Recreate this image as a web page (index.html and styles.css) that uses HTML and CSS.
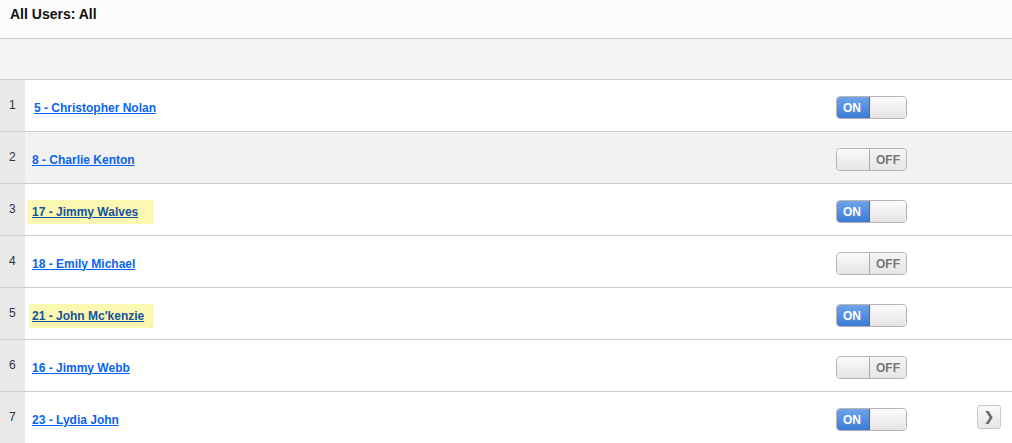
FILE: index.html
```html
<!DOCTYPE html>
<html lang="en">
<head>
    <meta charset="UTF-8">
    <meta name="viewport" content="width=device-width, initial-scale=1.0">
    <title>All Users</title>
    <link rel="stylesheet" href="styles.css">
</head>
<body>

<div class="page">
    <div class="header">All Users: All</div>
    <div class="toolbar"></div>

    <div class="list">
        <div class="row">
            <div class="idx">1</div>
            <div class="cell">
                <div class="name first"><a href="#">5 - Christopher Nolan</a></div>
                <div class="switch on"><span class="label">ON</span><span class="knob"></span></div>
            </div>
        </div>
        <div class="row alt">
            <div class="idx">2</div>
            <div class="cell">
                <div class="name"><a href="#">8 - Charlie Kenton</a></div>
                <div class="switch off"><span class="knob"></span><span class="label">OFF</span></div>
            </div>
        </div>
        <div class="row">
            <div class="idx">3</div>
            <div class="cell">
                <div class="name marked"><a href="#">17 - Jimmy Walves</a></div>
                <div class="switch on"><span class="label">ON</span><span class="knob"></span></div>
            </div>
        </div>
        <div class="row">
            <div class="idx">4</div>
            <div class="cell">
                <div class="name"><a href="#">18 - Emily Michael</a></div>
                <div class="switch off"><span class="knob"></span><span class="label">OFF</span></div>
            </div>
        </div>
        <div class="row">
            <div class="idx">5</div>
            <div class="cell">
                <div class="name marked m2"><a href="#">21 - John Mc'kenzie</a></div>
                <div class="switch on"><span class="label">ON</span><span class="knob"></span></div>
            </div>
        </div>
        <div class="row">
            <div class="idx">6</div>
            <div class="cell">
                <div class="name"><a href="#">16 - Jimmy Webb</a></div>
                <div class="switch off"><span class="knob"></span><span class="label">OFF</span></div>
            </div>
        </div>
        <div class="row">
            <div class="idx">7</div>
            <div class="cell">
                <div class="name"><a href="#">23 - Lydia John</a></div>
                <div class="switch on"><span class="label">ON</span><span class="knob"></span></div>
            </div>
        </div>
    </div>

    <button class="next">&#10095;</button>
</div>

</body>
</html>
```

FILE: styles.css
```css
body {
    margin: 0;
    font-family: "Liberation Sans", Arial, sans-serif;
    font-size: 12px;
    color: #333;
    background: #fff;
}
.page {
    position: relative;
    height: 443px;
    overflow: hidden;
}
.header {
    height: 39px;
    box-sizing: border-box;
    padding: 6px 10px;
    background: #fcfcfc;
    border-bottom: 1px solid #ccc;
    font-weight: bold;
    font-size: 14px;
    color: #111;
}
.toolbar {
    height: 40px;
    background: #f4f4f4;
    border-bottom: 1px solid #ccc;
}
.row {
    display: flex;
    height: 51px;
    border-bottom: 1px solid #ccc;
    background: #fff;
}
.row.alt {
    background: #f2f2f2;
}
.idx {
    width: 25px;
    flex-shrink: 0;
    background: #e9e9e9;
    padding: 18px 0 0 9px;
    box-sizing: border-box;
    color: #333;
}
.cell {
    flex: 1;
    display: flex;
    align-items: center;
    padding: 4px 105px 0 0;
}
.name {
    width: 126px;
    margin-left: 2px;
    padding: 5px 0 5px 5px;
    box-sizing: border-box;
    white-space: nowrap;
}
.name.first {
    padding-left: 7px;
}
.name a {
    color: #0a64f0;
    font-weight: bold;
    text-decoration: underline;
}
.name.marked {
    background: #fbf9b1;
}
.name.marked a {
    color: #14529e;
}
.name.m2 {
    margin-left: 4px;
    width: 124px;
    padding-left: 3px;
}
.switch {
    margin-left: auto;
    display: flex;
    width: 71px;
    height: 23px;
    box-sizing: border-box;
    border: 1px solid #b5b5b5;
    border-radius: 4px;
    overflow: hidden;
    font-weight: bold;
    font-size: 12px;
}
.switch .label {
    display: flex;
    align-items: center;
}
.switch.on .label {
    width: 33px;
    padding-left: 6px;
    box-sizing: border-box;
    color: #fff;
    background: linear-gradient(#6ea4ea, #3b7ad6);
    border-right: 1px solid #3a6bb3;
}
.switch.off .label {
    width: 37px;
    padding-left: 6px;
    box-sizing: border-box;
    color: #777;
    background: linear-gradient(#f4f4f4, #e6e6e6);
    border-left: 1px solid #aaa;
}
.switch .knob {
    flex: 1;
    background: linear-gradient(#fbfbfb, #e4e4e4);
}
.next {
    position: absolute;
    left: 977px;
    top: 405px;
    width: 24px;
    height: 24px;
    padding: 0;
    border: 1px solid #c9c9c9;
    border-radius: 3px;
    background: linear-gradient(#fafafa, #e6e6e6);
    color: #666;
    font-size: 13px;
    font-family: "DejaVu Sans", sans-serif;
    font-weight: bold;
    line-height: 22px;
    text-align: center;
}
```
